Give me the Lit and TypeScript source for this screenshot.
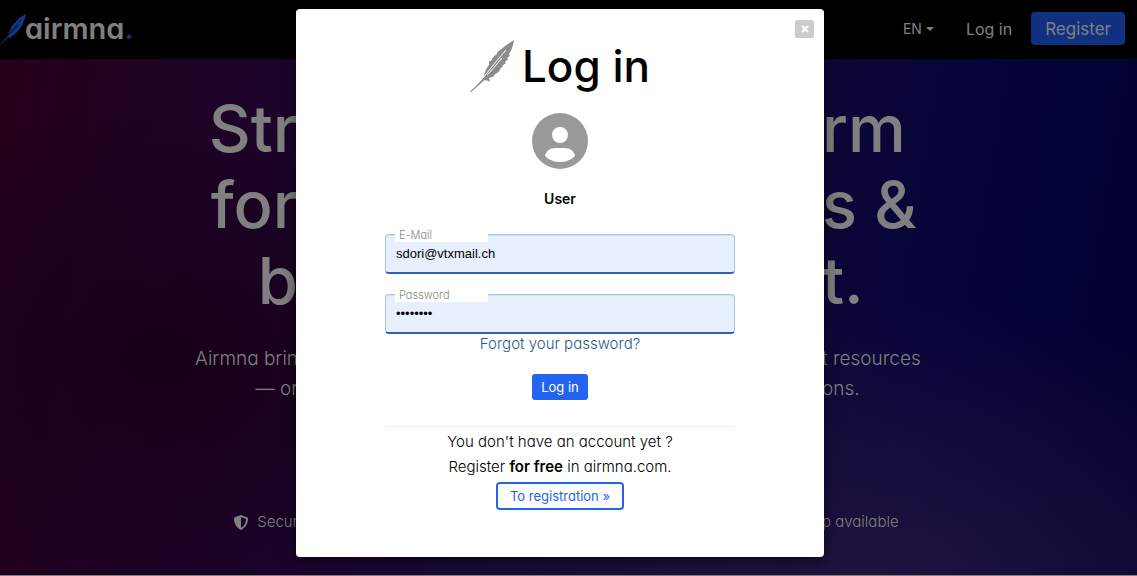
import { LitElement, html, css } from "lit";
import { customElement } from "lit/decorators.js";

const feather = () => html`<svg class="feather" viewBox="0 0 44 52" aria-hidden="true">
  <path fill="currentColor" d="M44 0C38 4 33 7 29 11L27.500 11.500 27 14C24 16 22 18 21 21L19 21 19 25C16 29 14.500 32 14 36L12 39.500C8 44 4 48 0 51.500L1 52C6 48 10 44 14 40.500C17 40 18 41 20 42L19 38 25 36 23.500 35.500 29 31.500C30 29 31 28 33 26L32 26 36 23 35 22 38.500 19 37 19 40 15 39 14C42 10 43 5 44 0Z"/>
  <path class="vein" d="M36 10C28 19 20 29 13 38M32 18C27 24 22 30 17 35"/>
</svg>`;

const HEADLINE = [["Str", "rm"], ["for", "s &"], ["b", "t."]];
const LEAD = [["Airmna brin", "t resources"], ["— or", "ons."]];

const line = ([start, end]: string[]) => html`<span class="line"><span>${start}</span><span>${end}</span></span>`;

@customElement("app-root")
export class AppRoot extends LitElement {
  static styles = css`
    :host {
      display: block; position: relative; min-height: 100vh; color: #000;
      font-family: Inter, "Open Sans", sans-serif; font-feature-settings: "cv11";
    }
    * { box-sizing: border-box; }
    h1, h2, p { margin: 0; font-weight: inherit; }
    a { text-decoration: none; color: inherit; }
    button { font: inherit; font-feature-settings: inherit; margin: 0; cursor: pointer; }
    svg { display: block; flex: none; }

    .page { min-height: 100vh; display: flex; flex-direction: column; color: #808080; border-bottom: 1px solid #808080; }
    .top { height: 59px; background: #000; display: flex; align-items: center; justify-content: space-between; padding: 0 12px 2px 0; }
    .brand { display: flex; align-items: center; font-size: 29px; font-weight: 600; line-height: 32px; }
    .brand .feather { width: 26px; height: 32px; color: #133a8a; margin-right: -1px; }
    .brand i { color: #123580; font-style: normal; }
    .nav { display: flex; align-items: center; font-size: 16px; line-height: 24px; }
    .lang { display: flex; align-items: center; gap: 4px; padding: 0; border: 0; background: none; color: inherit; font-size: 14px; margin-right: 32px; }
    .lang::after { content: ""; border: 4px solid transparent; border-top-color: currentColor; border-bottom: 0; }
    .nav a { margin-right: 19px; }
    .nav .join { background: #113180; border: 0; border-radius: 4px; padding: 4px 14px; height: 33px; color: inherit; font-size: 17px; line-height: 24px; }

    .hero {
      flex: 1; padding: 32px 17px 0 0;
      background:
        radial-gradient(ellipse 30% 50% at 14% 58%, #180018 0%, #18001800 100%),
        radial-gradient(ellipse 50% 60% at 74% 106%, #21153f 0%, #21153f00 100%),
        linear-gradient(100deg, #260018 0%, #1e0326 16%, #1a0430 34%, #0d0735 66%, #06043a 80%, #00002e 100%);
    }
    .line { display: grid; grid-template-columns: 1fr 524px 1fr; }
    .line > :first-child { grid-column: 1; text-align: right; }
    .line > :last-child { grid-column: 3; }
    .headline { font-size: 65px; line-height: 76px; font-weight: 500; white-space: pre; }
    .lead { font-size: 19px; line-height: 30px; font-weight: 300; margin-top: 25px; }
    .facts { font-size: 15px; line-height: 24px; font-weight: 300; margin-top: 106px; }
    .fact { display: inline-flex; align-items: center; gap: 9px; }

    .overlay { position: absolute; inset: 0; display: flex; justify-content: center; align-items: flex-start; padding: 9px 17px 9px 0; }
    .dialog {
      position: relative; width: 528px; padding: 31px 89px 47px; background: #fff; border-radius: 4px;
      box-shadow: 0 5px 15px #00000080; text-align: center; display: flex; flex-direction: column; align-items: center;
    }
    .close { position: absolute; top: 11px; right: 10px; width: 19px; height: 18px; padding: 0; border: 0; border-radius: 2px; background: #ccc; display: grid; place-items: center; }
    .title { display: flex; align-items: center; gap: 8px; font-size: 44px; line-height: 52px; font-weight: 500; }
    .title .feather { width: 44px; height: 52px; color: #8b8d89; }
    .vein { fill: none; stroke: #fff; stroke-width: 1; }
    .brand .vein { stroke: #000; }
    .avatar { margin-top: 21px; }
    .role { margin-top: 20px; font-size: 14px; line-height: 20px; font-weight: 600; }
    .form { align-self: stretch; display: flex; flex-direction: column; align-items: center; margin-top: 25px; }
    .field { position: relative; align-self: stretch; margin-bottom: 20px; }
    .field.last { margin-bottom: 0; }
    .field label { position: absolute; left: 10px; top: -6px; width: 93px; height: 14px; padding-left: 4px; background: #fff; color: #888; font-size: 11px; line-height: 14px; font-weight: 300; text-align: left; }
    .field input {
      display: block; width: 100%; height: 40px; padding: 0 10px; border: 1px solid #a9c4ec; border-bottom: 2px solid #2a63b8;
      border-radius: 4px; background: #e8effd; box-shadow: inset 0 1px 1px #00000013;
      font: 13px/20px "Liberation Sans", Arial, sans-serif; color: #000; outline: 0;
    }
    .forgot { color: #2c5a8c; font-size: 15px; line-height: 20px; font-weight: 300; }
    .submit { margin-top: 20px; height: 26px; padding: 0 9px; border: 0; border-radius: 3px; background: #2463f0; color: #fff; font-size: 13px; line-height: 26px; }
    .signup { align-self: stretch; margin-top: 26px; padding-top: 2px; border-top: 1px solid #eee; font-size: 15px; line-height: 25px; font-weight: 300; }
    .signup strong { font-weight: 600; }
    .register { height: 28px; padding: 0 12px; margin-top: 3px; border: 2px solid #2463f0; border-radius: 4px; background: #fff; color: #2463f0; font-size: 13px; line-height: 24px; font-weight: 400; display: inline-block; vertical-align: top; }
  `;

  render() {
    return html`
      <div class="page">
        <header class="top">
          <a class="brand" href="#">${feather()}<span>airmna<i>.</i></span></a>
          <nav class="nav">
            <button class="lang">EN</button>
            <a href="#">Log in</a>
            <button class="join">Register</button>
          </nav>
        </header>
        <main class="hero">
          <h1 class="headline">${HEADLINE.map(line)}</h1>
          <p class="lead">${LEAD.map(line)}</p>
          <div class="facts line">
            <span><span class="fact">
              <svg width="14" height="15" viewBox="0 0 14 15" aria-hidden="true">
                <path fill="currentColor" fill-rule="evenodd" d="M7 0L13 2.200Q14 2.600 14 3.500C14 8 12 12.500 7 15C2 12.500 0 8 0 3.500Q0 2.600 1 2.200ZM7 2V13C10.500 11 12 7.500 12 3.900Z"/>
              </svg>Secur</span></span>
            <span>p available</span>
          </div>
        </main>
      </div>
      <div class="overlay">
        <section class="dialog" role="dialog" aria-labelledby="title">
          <button class="close" aria-label="Close">
            <svg width="8" height="8" viewBox="0 0 8 8" aria-hidden="true"><path d="M1 1L7 7M7 1L1 7" stroke="#fff" stroke-width="2.200"/></svg>
          </button>
          <h2 class="title" id="title">${feather()}Log in</h2>
          <svg class="avatar" width="56" height="56" viewBox="0 0 56 56" aria-hidden="true">
            <circle cx="28" cy="28" r="28" fill="#999"/>
            <circle cx="28" cy="22" r="8" fill="#fff"/>
            <path fill="#fff" d="M13 43C14 38 18 35 23 35H33C38 35 42 38 43 43C39 47 34 49 28 49S17 47 13 43Z"/>
          </svg>
          <p class="role">User</p>
          <form class="form">
            <div class="field">
              <input id="email" type="email" value="sdori@vtxmail.ch" />
              <label for="email">E-Mail</label>
            </div>
            <div class="field last">
              <input id="password" type="password" value="password" />
              <label for="password">Password</label>
            </div>
            <a class="forgot" href="#">Forgot your password?</a>
            <button class="submit" type="button">Log in</button>
          </form>
          <div class="signup">
            <p>You don't have an account yet ?</p>
            <p>Register <strong>for free</strong> in airmna.com.</p>
            <a class="register" href="#">To registration »</a>
          </div>
        </section>
      </div>
    `;
  }
}
